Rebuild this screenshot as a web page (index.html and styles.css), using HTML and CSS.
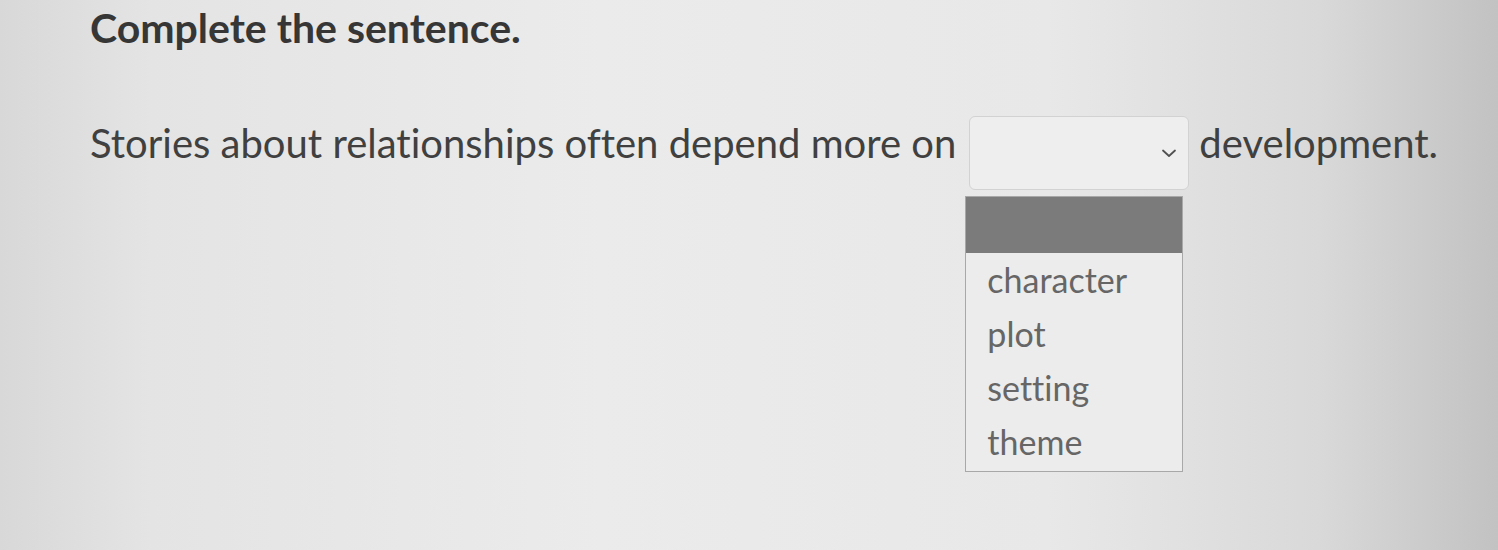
FILE: index.html
```html
<!DOCTYPE html>
<html lang="en">
<head>
    <meta charset="UTF-8">
    <meta name="viewport" content="width=device-width, initial-scale=1.0">
    <title>Complete the sentence</title>
    <link rel="stylesheet" href="styles.css">
</head>
<body>
    <div class="question">
        <h1>Complete the sentence.</h1>

        <div class="sentence">
            <span>Stories about relationships often depend more on</span>
            <div class="blank">
                <div class="select-box">
                    <svg class="chevron" width="16" height="10" viewBox="0 0 16 10">
                        <path d="M2 2.5 L8 8 L14 2.5" fill="none" stroke="#505050" stroke-width="1.8" stroke-linecap="round" stroke-linejoin="round"/>
                    </svg>
                </div>
                <!-- open list -->
                <ul class="options">
                    <li class="selected"></li>
                    <li>character</li>
                    <li>plot</li>
                    <li>setting</li>
                    <li>theme</li>
                </ul>
            </div>
            <span>development.</span>
        </div>
    </div>
</body>
</html>
```

FILE: styles.css
```css
html, body {
    height: 100%;
}
body {
    margin: 0;
    font-family: Lato, "Open Sans", sans-serif;
    font-variant-ligatures: none;
    color: #3c3c3c;
    background: linear-gradient(90deg, #d8d8d8 0%, #e4e4e4 10%, #ebebeb 40%, #e8e8e8 70%, #d9d9d9 88%, #c2c2c2 100%);
    overflow: hidden;
}
.question {
    padding: 4px 0 0 90px;
}
h1 {
    margin: 0;
    font-size: 41px;
    font-weight: 700;
    color: #363636;
    line-height: 48px;
}
.sentence {
    display: flex;
    align-items: flex-start;
    margin-top: 64px;
    font-size: 40px;
    line-height: 48px;
    color: #404040;
}
.sentence > span {
    margin-top: 3px;
}
.blank {
    position: relative;
    margin: 0 10px 0 13px;
}
.select-box {
    width: 218px;
    height: 72px;
    border: 1px solid #d2d2d2;
    border-radius: 6px;
    background: #eeeeee;
    position: relative;
}
.chevron {
    position: absolute;
    right: 11px;
    top: 31px;
}
.options {
    position: absolute;
    top: 80px;
    left: -4px;
    width: 216px;
    margin: 0;
    padding: 0 0 2px;
    list-style: none;
    background: #ececec;
    border: 1px solid #a8a8a8;
    font-size: 34px;
    color: #666;
}
.options li {
    height: 54px;
    line-height: 54px;
    padding-left: 21px;
}
.options li.selected {
    background: #7b7b7b;
    height: 56px;
}
```
